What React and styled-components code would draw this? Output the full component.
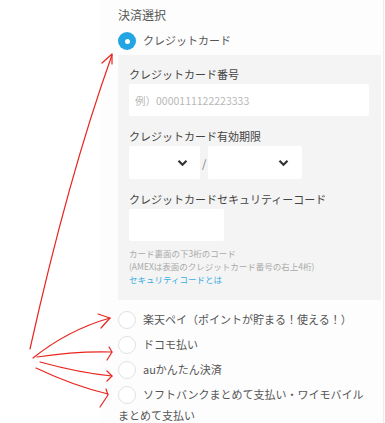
import React from "react";
import styled, { createGlobalStyle } from "styled-components";

const GlobalStyle = createGlobalStyle`
  body {
    margin: 0;
    background: #fff;
    font-family: "Noto Sans CJK JP", "Noto Sans", sans-serif;
  }
`;

const ChevronDown = () => (
  <svg width="11" height="8" viewBox="0 0 11 8">
    <path d="M1.5 1.8 L5.5 5.8 L9.5 1.8" fill="none" stroke="#333" strokeWidth="2.2" />
  </svg>
);

const Arrows = () => (
  <ArrowLayer width="385" height="423" viewBox="0 0 385 423">
    <g fill="none" stroke="#e8261f" strokeWidth="1.2" strokeLinecap="round" strokeLinejoin="round">
      <path d="M30 349 C 52 250, 78 150, 112 55" />
      <path d="M102 63 L112 54 L112 64" />
      <path d="M33 358 Q 68 330 110 318" />
      <path d="M98 314 L110 318 L101 328" />
      <path d="M37 357 Q 76 351 112 352" />
      <path d="M109 347 L112 352 L107 360" />
      <path d="M40 362 Q 80 373 112 376" />
      <path d="M107 371 L112 376 L107 381" />
      <path d="M36 368 Q 74 386 108 394" />
      <path d="M106 389 L108 395 L100 407" />
    </g>
  </ArrowLayer>
);

const options = [
  "楽天ペイ（ポイントが貯まる！使える！）",
  "ドコモ払い",
  "auかんたん決済",
  "ソフトバンクまとめて支払い・ワイモバイルまとめて支払い",
];

export default function App() {
  return (
    <Page>
      <GlobalStyle />
      <Column>
        <Heading>決済選択</Heading>
        <Option>
          <Radio checked />
          クレジットカード
        </Option>
        <Panel>
          <Field>
            <Label>クレジットカード番号</Label>
            <TextInput width={240}>
              <Placeholder>例）0000111122223333</Placeholder>
            </TextInput>
          </Field>
          <Field>
            <Label>クレジットカード有効期限</Label>
            <SelectRow>
              <Select width={71} pad={12}>
                <ChevronDown />
              </Select>
              <Slash>/</Slash>
              <Select width={94} pad={13}>
                <ChevronDown />
              </Select>
            </SelectRow>
          </Field>
          <Field>
            <Label>クレジットカードセキュリティーコード</Label>
            <TextInput width={95} />
          </Field>
          <Note>
            <NoteLine>カード裏面の下3桁のコード</NoteLine>
            <NoteLine>(AMEXは表面のクレジットカード番号の右上4桁)</NoteLine>
            <NoteLink>セキュリティコードとは</NoteLink>
          </Note>
        </Panel>
        <OptionList>
          {options.map((label) => (
            <Option key={label} wrap>
              <Radio />
              {label}
            </Option>
          ))}
        </OptionList>
      </Column>
      <Arrows />
    </Page>
  );
}

const Page = styled.div`
  position: relative;
  width: 385px;
  height: 423px;
  overflow: hidden;
  background: #fff;
`;

const Column = styled.div`
  box-sizing: border-box;
  margin-left: 100px;
  width: 284px;
  height: 423px;
  padding: 7px 3px 0 18px;
  background: #fdfdfd;
  border-right: 1px solid #ececec;
`;

const Heading = styled.div`
  font-size: 12px;
  line-height: 16px;
  color: #555;
`;

const Option = styled.div`
  font-size: 11px;
  line-height: 20px;
  color: #555;
  margin-top: ${(p) => (p.wrap ? "4px" : "7px")};
  padding-right: ${(p) => (p.wrap ? "16px" : "0")};
`;

const Radio = styled.span`
  box-sizing: border-box;
  display: inline-block;
  vertical-align: middle;
  position: relative;
  top: -1px;
  width: 18px;
  height: 18px;
  margin-right: 7px;
  border-radius: 50%;
  background: ${(p) => (p.checked ? "#22a6e3" : "#fff")};
  border: ${(p) => (p.checked ? "none" : "1.5px solid #e2e2e2")};

  &::after {
    content: "";
    display: ${(p) => (p.checked ? "block" : "none")};
    position: absolute;
    left: 6.5px;
    top: 6.5px;
    width: 5px;
    height: 5px;
    border-radius: 50%;
    background: #fff;
  }
`;

const Panel = styled.div`
  margin-top: 4px;
  width: 263px;
  box-sizing: border-box;
  padding: 12px 11px 14px;
  background: #f4f4f4;
  display: flex;
  flex-direction: column;
  gap: 13px;
`;

const Field = styled.div`
  display: flex;
  flex-direction: column;
  gap: 3px;
`;

const Label = styled.div`
  font-size: 11px;
  line-height: 14px;
  font-weight: 400;
  color: #444;
`;

const TextInput = styled.div`
  box-sizing: border-box;
  width: ${(p) => p.width}px;
  height: 32px;
  background: #fff;
  border-radius: 2px;
  display: flex;
  align-items: center;
  padding-left: 6px;
`;

const Placeholder = styled.span`
  font-size: 10.5px;
  color: #b8b8b8;
`;

const SelectRow = styled.div`
  display: flex;
  align-items: center;
`;

const Select = styled.div`
  box-sizing: border-box;
  width: ${(p) => p.width}px;
  height: 33px;
  background: #fff;
  border-radius: 2px;
  display: flex;
  align-items: center;
  justify-content: flex-end;
  padding-right: ${(p) => p.pad}px;
`;

const Slash = styled.span`
  font-size: 11px;
  color: #777;
  margin: 0 2px;
`;

const Note = styled.div`
  margin-top: -7px;
  font-size: 8.5px;
  line-height: 13px;
`;

const NoteLine = styled.div`
  color: #aaa;
  white-space: nowrap;
`;

const NoteLink = styled.div`
  color: #3aaee2;
`;

const OptionList = styled.div`
  margin-top: 9px;
`;

const ArrowLayer = styled.svg`
  position: absolute;
  left: 0;
  top: 0;
  pointer-events: none;
`;
